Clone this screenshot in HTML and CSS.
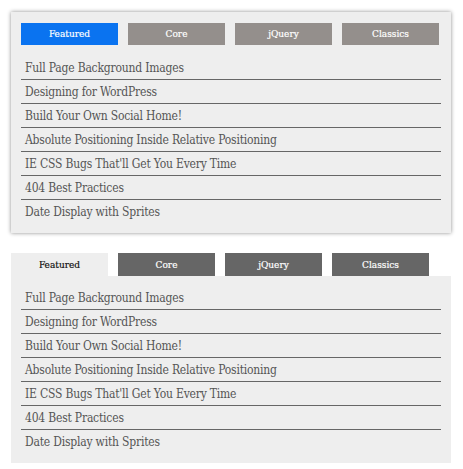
FILE: index.html
```html
<!DOCTYPE html>
<html lang="en">
<head>
  <meta charset="UTF-8">
  <title>Tabbed Lists</title>
  <link rel="stylesheet" href="styles.css">
</head>
<body>
  <!-- Style one: boxed panel with tabs inside -->
  <div class="box box-one">
    <ul class="tabs">
      <li class="tab current">Featured</li>
      <li class="tab">Core</li>
      <li class="tab">jQuery</li>
      <li class="tab">Classics</li>
    </ul>
    <ul class="list">
      <li>Full Page Background Images</li>
      <li>Designing for WordPress</li>
      <li>Build Your Own Social Home!</li>
      <li>Absolute Positioning Inside Relative Positioning</li>
      <li>IE CSS Bugs That'll Get You Every Time</li>
      <li>404 Best Practices</li>
      <li>Date Display with Sprites</li>
    </ul>
  </div>

  <!-- Style two: tabs sitting on top of the panel -->
  <div class="box-two">
    <ul class="tabs">
      <li class="tab current">Featured</li>
      <li class="tab">Core</li>
      <li class="tab">jQuery</li>
      <li class="tab">Classics</li>
    </ul>
    <ul class="list panel">
      <li>Full Page Background Images</li>
      <li>Designing for WordPress</li>
      <li>Build Your Own Social Home!</li>
      <li>Absolute Positioning Inside Relative Positioning</li>
      <li>IE CSS Bugs That'll Get You Every Time</li>
      <li>404 Best Practices</li>
      <li>Date Display with Sprites</li>
    </ul>
  </div>
</body>
</html>
```
FILE: styles.css
```css
body {
  margin: 0;
  padding: 12px 12px 0 11px;
  background: #fff;
  font-family: "DejaVu Serif", Georgia, serif;
  font-stretch: condensed;
}

ul {
  list-style: none;
  margin: 0;
  padding: 0;
}

.tabs {
  display: flex;
  gap: 10px;
}

.tab {
  width: 97px;
  height: 22px;
  line-height: 22px;
  text-align: center;
  font-size: 10px;
  color: #fff;
  -webkit-text-stroke: 0.2px currentColor;
}

.list li {
  height: 23px;
  line-height: 24px;
  padding-left: 4px;
  font-size: 12px;
  letter-spacing: -0.2px;
  color: #555;
  border-bottom: 1px solid #666;
}

.list li:last-child {
  border-bottom: none;
}

/* box one */
.box-one {
  width: 440px;
  box-sizing: border-box;
  padding: 11px 10px 10px;
  background: #eee;
  box-shadow: 0 0 4px rgba(0, 0, 0, 0.45);
}

.box-one .tabs {
  margin-bottom: 11px;
}

.box-one .tab {
  background: #948f8c;
}

.box-one .tab.current {
  background: #0a73f0;
}

/* box two */
.box-two {
  width: 440px;
  margin-top: 20px;
}

.box-two .tab {
  height: 23px;
  line-height: 23px;
  background: #666;
}

.box-two .tab.current {
  background: #eee;
  color: #111;
}

.panel {
  background: #eee;
  padding: 10px 10px;
}
```
